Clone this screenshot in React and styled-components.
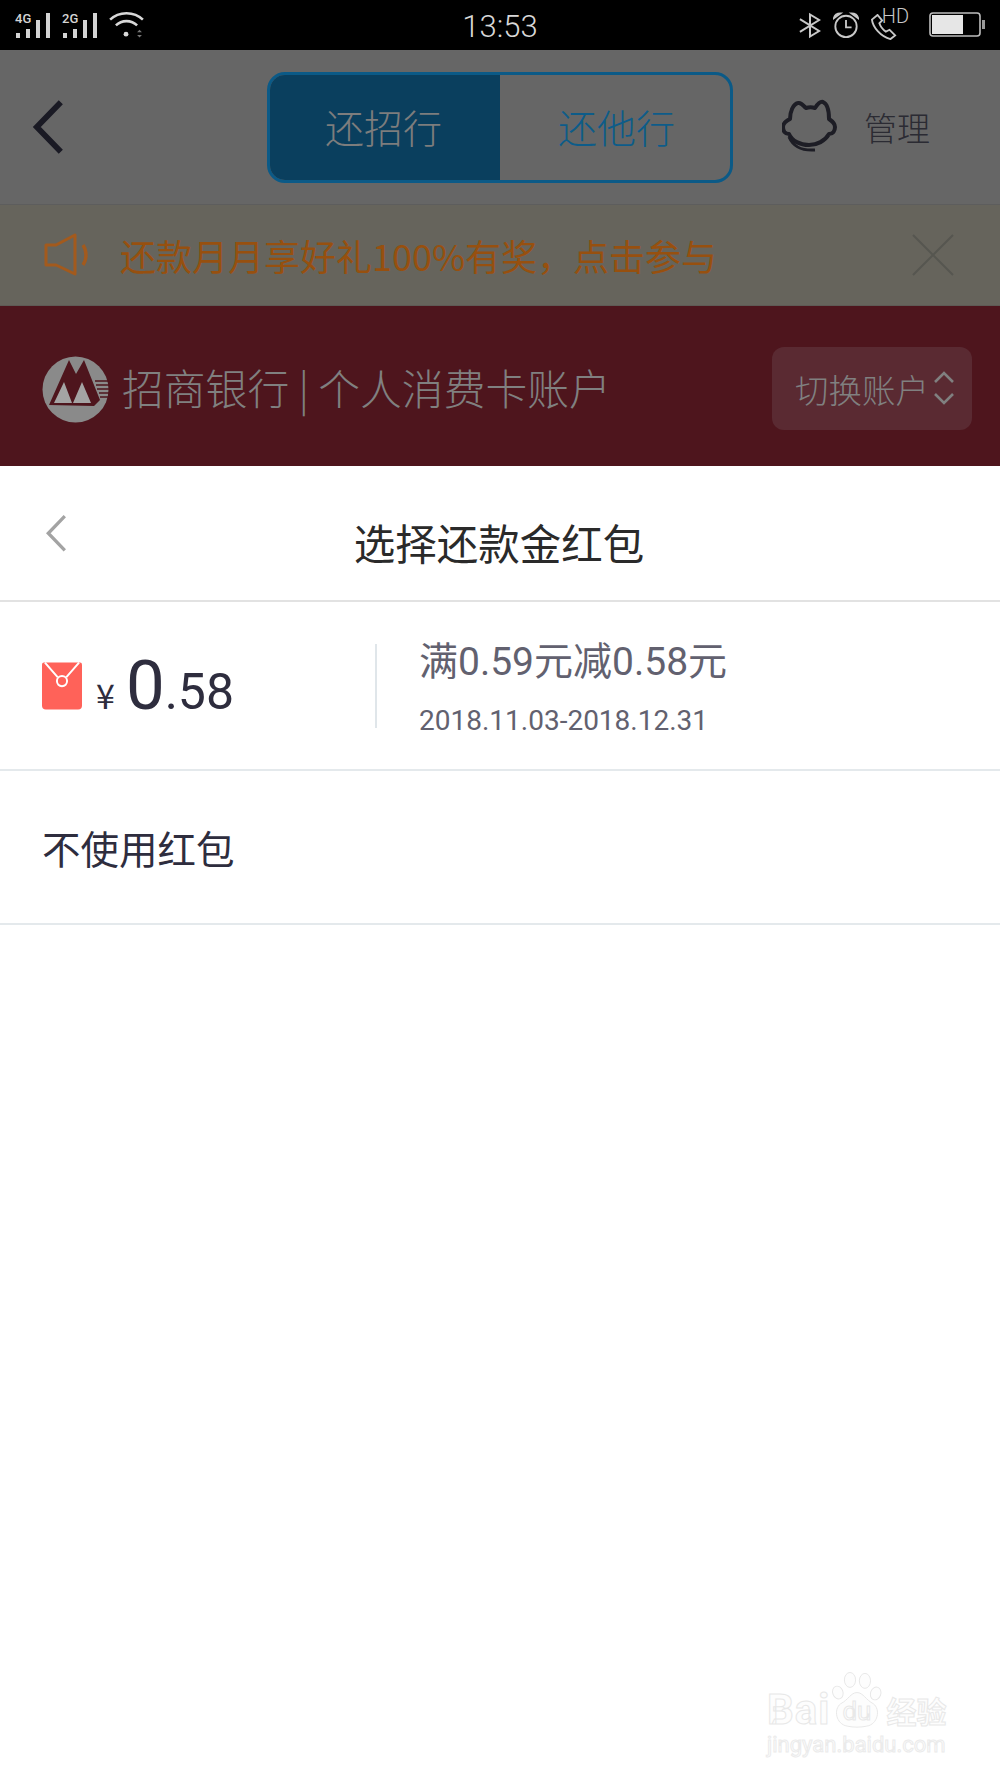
import React from 'react';
import styled, { createGlobalStyle } from 'styled-components';

const GlobalStyle = createGlobalStyle`
	html, body {
		margin: 0;
		padding: 0;
		background: #ffffff;
	}
	* {
		box-sizing: border-box;
	}
`;

const SignalBars = () => (
	<svg width="35" height="25" viewBox="0 0 35 25" fill="#d4d4d4">
		<rect x="1" y="20" width="4" height="5" />
		<rect x="11" y="16" width="4" height="9" />
		<rect x="21" y="7" width="4" height="18" />
		<rect x="31" y="0" width="4" height="25" />
	</svg>
);

const Wifi = () => (
	<svg width="35" height="27" viewBox="0 0 36 28" fill="none" stroke="#d8d8d8" strokeWidth="2.6">
		<path d="M1 9 C10 0 26 0 35 9" />
		<path d="M7 15 C13 9 23 9 29 15" />
		<circle cx="17.5" cy="24" r="2.5" fill="#d8d8d8" stroke="none" />
		<path d="M29 22 l2.5 -2.5 l2.5 2.5 z M29 25 h5 l-2.5 2.5 z" fill="#777" stroke="none" />
	</svg>
);

const Bluetooth = () => (
	<svg width="22" height="27" viewBox="0 0 24 28" fill="none" stroke="#c8c8c8" strokeWidth="2.2">
		<path d="M1 7 L22 20 L12 26 V2 L22 8 L1 21" />
	</svg>
);

const Alarm = () => (
	<svg width="26" height="27" viewBox="0 0 28 28" fill="none" stroke="#c8c8c8" strokeWidth="2">
		<circle cx="14" cy="15" r="11.5" />
		<path d="M14 8 V16 H20" />
		<path d="M1 6 C2 2 5 1 8 1 Z M27 6 C26 2 23 1 20 1 Z" fill="#c8c8c8" />
	</svg>
);

const Phone = () => (
	<svg width="26" height="26" viewBox="0 0 28 28" fill="none" stroke="#c8c8c8" strokeWidth="2">
		<path d="M7 1 L1 6 C2 14 10 24 21 27 L26 23 L20 17 L16 19 C13 17 10 13 9 10 L12 7 Z" />
	</svg>
);

const Battery = () => (
	<svg width="56" height="26" viewBox="0 0 56 26">
		<rect x="1" y="1" width="50" height="23" rx="3" fill="none" stroke="#bdbdbd" strokeWidth="1.6" />
		<rect x="3" y="3" width="31" height="19" fill="#e6e6e6" />
		<rect x="53" y="8" width="3" height="9" fill="#999" />
	</svg>
);

const BackArrow = ({ size, color, weight }) => (
	<svg width={size} height={size * 1.75} viewBox="0 0 20 35" fill="none" stroke={color} strokeWidth={weight}>
		<path d="M18 2 L3 17.5 L18 33" />
	</svg>
);

// service mascot, a cat head with a headset cable
const CatIcon = () => (
	<svg width="56" height="56" viewBox="0 0 56 56" fill="none" stroke="#1d1d25" strokeWidth="4" strokeLinejoin="round">
		<path d="M8 20 C8 13 11 5 16 4 C20 3 22 8 24 9 C27 8 30 8 33 9 C35 6 38 2 41 3 C46 5 47 14 47 20 C50 22 53 25 53 28 C53 32 51 35 47 35 C43 42 35 46 27 46 C18 46 10 42 7 35 C3 35 1 32 1 28 C1 25 4 22 8 20 Z" />
		<path d="M7 38 C11 47 18 52 33 51" strokeWidth="3" />
	</svg>
);

const Speaker = () => (
	<svg width="48" height="44" viewBox="0 0 48 44" fill="none" stroke="#a35a1d" strokeWidth="3.4" strokeLinejoin="round">
		<path d="M4 12 H14 L33 2 V41 L14 32 H4 Z" strokeWidth="3" />
		<path d="M41 12 C45 18 45 26 41 32" />
	</svg>
);

const CloseIcon = () => (
	<svg width="42" height="42" viewBox="0 0 42 42" stroke="#565650" strokeWidth="2">
		<path d="M1 1 L41 41 M41 1 L1 41" />
	</svg>
);

const BankLogo = () => (
	<svg width="67" height="67" viewBox="0 0 67 67">
		<circle cx="33.5" cy="33.5" r="33" fill="#8a8a8a" />
		<path d="M7 49 L27 4 L34 18 L42 4 L58 44 L52 50 Z" fill="#4e151d" />
		<path d="M12 47 L22 26 L30 47 Z M31 47 L40 26 L49 47 Z" fill="#a4a4a4" />
		<path d="M53 25 H67 M54 29 H67 M55 33 H67 M57 37 H67 M58 41 H66" stroke="#4e151d" strokeWidth="1.4" />
	</svg>
);

const RedPacket = () => (
	<svg width="40" height="48" viewBox="0 0 41 48">
		<path d="M2 0 H39 Q41 0 41 2 V44 Q41 48 37 48 H4 Q0 48 0 44 V2 Q0 0 2 0 Z" fill="#ff6259" />
		<path d="M3 0 L16 15 M38 0 L25 15" stroke="#ffffff" strokeWidth="2" fill="none" />
		<circle cx="20.5" cy="19" r="5.2" fill="none" stroke="#ffffff" strokeWidth="2" />
	</svg>
);

const Paw = () => (
	<svg width="106" height="120" viewBox="0 0 106 120" fill="#fdfdfd" stroke="#e6e6e6" strokeWidth="2">
		<ellipse cx="38" cy="17" rx="12" ry="16" />
		<ellipse cx="70" cy="19" rx="12" ry="16" />
		<ellipse cx="12" cy="44" rx="11" ry="14" transform="rotate(-20 12 44)" />
		<ellipse cx="93" cy="46" rx="11" ry="14" transform="rotate(20 93 46)" />
		<path d="M53 44 C66 44 72 60 88 68 C104 80 98 112 74 116 C60 119 46 119 32 116 C8 112 2 80 18 68 C34 60 40 44 53 44 Z" />
	</svg>
);

const App = () => {
	return (
		<Page>
			<GlobalStyle />
			<StatusBar>
				<StatusLeft>
					<Network>
						<NetworkLabel>4G</NetworkLabel>
						<SignalBars />
					</Network>
					<Network>
						<NetworkLabel>2G</NetworkLabel>
						<SignalBars />
					</Network>
					<Wifi />
				</StatusLeft>
				<Clock>13:53</Clock>
				<StatusRight>
					<Bluetooth />
					<Alarm />
					<CallGroup>
						<Phone />
						<HdLabel>HD</HdLabel>
					</CallGroup>
					<Battery />
				</StatusRight>
			</StatusBar>

			<Header>
				<HeaderBack>
					<BackArrow size={32} color="#1a1a24" weight={3.6} />
				</HeaderBack>
				<Segments>
					<Segment $active>还招行</Segment>
					<Segment>还他行</Segment>
				</Segments>
				<Manage>
					<CatIcon />
					<ManageLabel>管理</ManageLabel>
				</Manage>
			</Header>

			<Notice>
				<NoticeMain>
					<Speaker />
					<NoticeText>还款月月享好礼100%有奖，点击参与</NoticeText>
				</NoticeMain>
				<CloseIcon />
			</Notice>

			<BankBar>
				<BankInfo>
					<BankLogo />
					<BankName>招商银行 | 个人消费卡账户</BankName>
				</BankInfo>
				<SwitchButton>
					切换账户
					<Chevrons width="22" height="34" viewBox="0 0 22 34" fill="none" stroke="#808080" strokeWidth="2.6">
						<path d="M2 11 L11 2 L20 11 M2 23 L11 32 L20 23" />
					</Chevrons>
				</SwitchButton>
			</BankBar>

			<Sheet>
				<SheetHeader>
					<SheetBack>
						<BackArrow size={22} color="#a3a3a3" weight={3} />
					</SheetBack>
					<SheetTitle>选择还款金红包</SheetTitle>
				</SheetHeader>

				<CouponRow>
					<CouponAmount>
						<RedPacket />
						<Currency>¥</Currency>
						<AmountInt>0</AmountInt>
						<AmountDec>.58</AmountDec>
					</CouponAmount>
					<CouponDivider />
					<CouponInfo>
						<CouponRule>满0.59元减0.58元</CouponRule>
						<CouponDate>2018.11.03-2018.12.31</CouponDate>
					</CouponInfo>
				</CouponRow>

				<NoCouponRow>不使用红包</NoCouponRow>
			</Sheet>

			<Watermark>
				<LogoLine>
					<WordMark>Bai</WordMark>
					<PawWrap>
						<Paw />
						<PawText>du</PawText>
					</PawWrap>
					<WordMark $cjk>经验</WordMark>
				</LogoLine>
				<WatermarkUrl>jingyan.baidu.com</WatermarkUrl>
			</Watermark>
		</Page>
	);
};

export default App;

const cjk = `"Noto Sans CJK SC", "Noto Sans", sans-serif`;
const latin = `Roboto, "Noto Sans CJK SC", sans-serif`;

const Page = styled.div`
	position: relative;
	width: 1000px;
	height: 1778px;
	overflow: hidden;
	background: #ffffff;
	font-family: ${latin};
`;

const StatusBar = styled.div`
	display: grid;
	grid-template-columns: 1fr auto 1fr;
	align-items: center;
	height: 50px;
	background: #000000;
`;
const StatusLeft = styled.div`
	display: flex;
	align-items: flex-end;
	gap: 12px;
	padding: 0 0 12px 15px;
	height: 50px;
`;
const Network = styled.div`
	position: relative;
	width: 35px;
	height: 25px;
	display: flex;
	align-items: flex-end;
`;
const NetworkLabel = styled.span`
	position: absolute;
	left: 0;
	top: 0;
	font-size: 13px;
	font-weight: 500;
	line-height: 12px;
	color: #d4d4d4;
`;
const Clock = styled.div`
	padding-top: 3px;
	font-size: 31px;
	font-weight: 300;
	color: #d8d8d8;
`;
const StatusRight = styled.div`
	display: flex;
	align-items: center;
	justify-content: flex-end;
	gap: 12px;
	padding: 0 15px 0 0;
`;
const CallGroup = styled.div`
	position: relative;
	width: 38px;
	height: 27px;
	margin-right: 8px;

	svg {
		margin-top: 2px;
	}
`;
const HdLabel = styled.span`
	position: absolute;
	right: 0;
	top: -6px;
	font-size: 20px;
	font-weight: 300;
	line-height: 20px;
	color: #c8c8c8;
`;

const Header = styled.div`
	display: grid;
	grid-template-columns: 267px 466px 1fr;
	align-items: center;
	height: 155px;
	background: #666666;
	border-bottom: 1px solid #5d5d5d;
`;
const HeaderBack = styled.div`
	display: flex;
	padding-left: 32px;
`;
const Segments = styled.div`
	display: flex;
	height: 111px;
	border: 3px solid #0b5a87;
	border-radius: 18px;
	overflow: hidden;
`;
const Segment = styled.div`
	flex: 1;
	display: flex;
	align-items: center;
	justify-content: center;
	font-family: ${cjk};
	font-size: 39px;
	font-weight: 300;
	padding: ${props => (props.$active ? '0 3px 3px 0' : '0 0 3px 3px')};
	color: ${props => (props.$active ? '#7d7d7d' : '#0d5c89')};
	background: ${props => (props.$active ? '#0a3f5e' : 'transparent')};
`;
const Manage = styled.div`
	display: flex;
	align-items: center;
	padding-left: 49px;
`;
const ManageLabel = styled.div`
	margin-left: 26px;
	font-family: ${cjk};
	font-size: 33px;
	font-weight: 300;
	color: #2b2b33;
`;

const Notice = styled.div`
	display: flex;
	align-items: center;
	justify-content: space-between;
	height: 101px;
	padding: 0 46px 0 42px;
	background: #66645c;
	border-bottom: 1px solid #5e5a55;
`;
const NoticeMain = styled.div`
	display: flex;
	align-items: center;
`;
const NoticeText = styled.div`
	margin-left: 30px;
	font-family: ${cjk};
	font-size: 36px;
	font-weight: 400;
	color: #97500f;
`;

const BankBar = styled.div`
	display: flex;
	align-items: center;
	justify-content: space-between;
	height: 160px;
	padding: 0 28px 0 42px;
	background: #4e151d;
`;
const BankInfo = styled.div`
	display: flex;
	align-items: center;
	padding-top: 6px;
`;
const BankName = styled.div`
	margin-left: 13px;
	margin-top: -4px;
	font-family: ${cjk};
	font-size: 41.8px;
	font-weight: 300;
	color: #808080;
`;
const SwitchButton = styled.div`
	display: flex;
	align-items: center;
	justify-content: space-between;
	width: 200px;
	height: 83px;
	margin-top: 4px;
	padding: 0 17px 0 23px;
	border-radius: 12px;
	background: #5a2a32;
	font-family: ${cjk};
	font-size: 33.5px;
	font-weight: 300;
	color: #808080;
`;
const Chevrons = styled.svg`
	flex-shrink: 0;
`;

const Sheet = styled.div`
	background: #ffffff;
`;
const SheetHeader = styled.div`
	position: relative;
	display: flex;
	align-items: center;
	justify-content: center;
	height: 136px;
	border-bottom: 2px solid #e2e2e2;
`;
const SheetBack = styled.div`
	position: absolute;
	left: 45px;
	top: 48px;
`;
const SheetTitle = styled.div`
	margin-top: 18px;
	margin-right: 2px;
	font-family: ${cjk};
	font-size: 41.5px;
	font-weight: 400;
	color: #2a2a2a;
`;
const CouponRow = styled.div`
	display: flex;
	align-items: center;
	height: 169px;
	padding-left: 42px;
	border-bottom: 2px solid #e4e9ec;
`;
const CouponAmount = styled.div`
	display: flex;
	align-items: baseline;
	width: 333px;
	color: #2e2d3e;

	svg {
		align-self: center;
		margin-top: 0;
	}
`;
const Currency = styled.span`
	margin-left: 14px;
	font-size: 34px;
	font-family: ${cjk};
	font-weight: 400;
`;
const AmountInt = styled.span`
	margin-left: 11px;
	font-size: 69px;
	font-weight: 400;
`;
const AmountDec = styled.span`
	font-size: 50px;
	font-weight: 400;
`;
const CouponDivider = styled.div`
	width: 2px;
	height: 84px;
	background: #e0e6ea;
`;
const CouponInfo = styled.div`
	display: flex;
	flex-direction: column;
	margin-left: 42px;
	color: #62616f;
`;
const CouponRule = styled.div`
	margin-top: 4px;
	font-size: 39px;
	line-height: 50px;
	font-weight: 400;
`;
const CouponDate = styled.div`
	margin-top: 17px;
	font-size: 28px;
	line-height: 34px;
`;
const NoCouponRow = styled.div`
	display: flex;
	align-items: center;
	height: 154px;
	padding: 0 0 0 42px;
	border-bottom: 2px solid #e4e9ec;
	font-family: ${cjk};
	font-size: 38.5px;
	font-weight: 400;
	color: #2e2d3e;
`;

// faint stamp in the lower right corner, over the empty sheet
const Watermark = styled.div`
	position: absolute;
	left: 767px;
	top: 1672px;
	width: 190px;
	pointer-events: none;
`;
const LogoLine = styled.div`
	display: flex;
	align-items: flex-end;
	height: 56px;
`;
const WordMark = styled.span`
	font-family: ${props => (props.$cjk ? cjk : latin)};
	font-size: ${props => (props.$cjk ? '30px' : '42px')};
	font-weight: 700;
	line-height: 36px;
	letter-spacing: ${props => (props.$cjk ? '0' : '1px')};
	color: #fdfdfd;
	-webkit-text-stroke: 1px #e8e8e8;
`;
const PawWrap = styled.div`
	position: relative;
	width: 54px;
	height: 56px;
	margin-right: 2px;
	flex-shrink: 0;

	svg {
		width: 54px;
		height: 56px;
	}
`;
const PawText = styled.span`
	position: absolute;
	left: 12px;
	bottom: 3px;
	font-size: 26px;
	line-height: 28px;
	color: #fdfdfd;
	-webkit-text-stroke: 1px #e8e8e8;
`;
const WatermarkUrl = styled.div`
	margin-top: 3px;
	font-size: 22px;
	line-height: 28px;
	color: #fdfdfd;
	-webkit-text-stroke: 1px #ebebeb;
	white-space: nowrap;
`;
